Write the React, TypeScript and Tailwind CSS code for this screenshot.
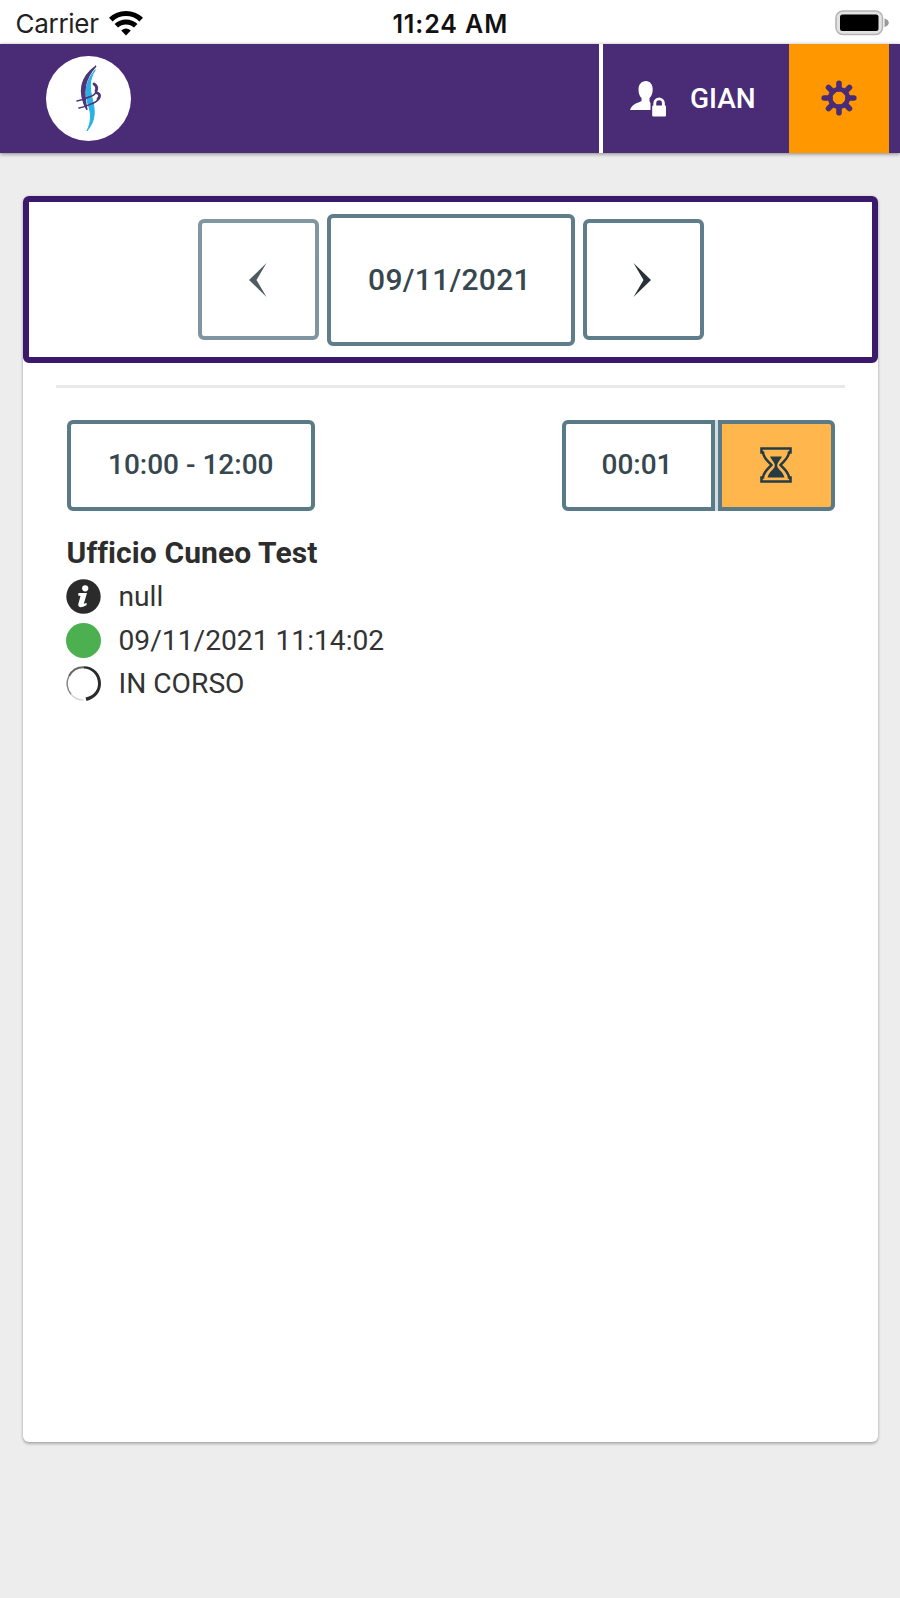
import type { ReactNode } from "react";

function WifiIcon() {
  return (
    <svg className="mb-[2px] block h-[26px] w-[34px]" viewBox="0 0 34 26" fill="none" stroke="#000">
      <path d="M1.8 9.6A22 22 0 0 1 32.2 9.6" strokeWidth="5.2" />
      <path d="M7.3 15.8A14 14 0 0 1 26.7 15.8" strokeWidth="5" />
      <path d="M12.2 20.500Q17 16.7 21.8 20.500L17 25.500Z" fill="#000" stroke="none" />
    </svg>
  );
}

function BatteryIcon() {
  return (
    <svg className="block h-[26px] w-[54px]" viewBox="0 0 54 26">
      <rect x="1" y="1" width="46.5" height="23.5" rx="7" fill="#e2e2e2" stroke="#b5b5b5" strokeWidth="1.6" />
      <rect x="5" y="4.500" width="38.500" height="16.500" rx="2.5" fill="#000" />
      <path d="M49.500 8.5Q53.8 10 53.8 12.8T49.500 17Z" fill="#999" />
    </svg>
  );
}

function Logo() {
  return (
    <div className="flex h-[85px] w-[85px] items-center justify-center rounded-full bg-white">
      <svg className="h-[85px] w-[85px]" viewBox="0 0 85 85" fill="none" strokeLinecap="round">
        <path d="M49 14C39 26 39 36 42 48C46 59 45 66 41 75C50 64 49 55 46.500 44C43.500 32 43 24 49 14Z" fill="#29b1e6" stroke="#29b1e6" strokeWidth="1" />
        <path d="M50 10C32 23 33 39 41 54C37.500 37 37 24 50 10Z" fill="#4c3579" stroke="#4c3579" strokeWidth="1.400" />
        <path d="M48 28C53 32 51 39 43 41C39 43 36 44 31 45" stroke="#4c3579" strokeWidth="1.500" />
        <path d="M51 37C57 39 52 46 45 48C40 50 38 51 33 52" stroke="#4c3579" strokeWidth="1.500" />
        <path d="M48 28C51 30 51 33 50 35M51 37C54.500 38 54 41 52 43" stroke="#4c3579" strokeWidth="2.8" />
      </svg>
    </div>
  );
}

function UserLockIcon() {
  return (
    <svg className="block h-[36px] w-[37px]" viewBox="0 0 37 36" fill="#fff">
      <path d="M16 0C11.500 0 8.500 3.500 8.500 8.500C8.500 12.500 9.500 15 11.500 17V20C8 22.500 2.500 22 0 29H20.500V22.500L19.500 20V17C21.500 15 22.700 12.500 22.700 8.500C22.700 3.500 20 0 16 0Z" />
      <rect x="22.200" y="24.500" width="13.800" height="11" rx="1" />
      <path d="M24.800 25V22.200A4.300 4.300 0 0 1 33.400 22.200V25" fill="none" stroke="#fff" strokeWidth="2.900" />
    </svg>
  );
}

const spokes = [0, 45, 90, 135, 180, 225, 270, 315];

function GearIcon() {
  return (
    <svg className="mb-px block h-[36px] w-[36px]" viewBox="-18 -18 36 36">
      {spokes.map((angle) => (
        <line key={angle} x1="0" y1="-9" x2="0" y2="-14.800" transform={`rotate(${angle})`} stroke="#4a2b76" strokeWidth="5.600" strokeLinecap="round" />
      ))}
      <circle r="8.800" fill="none" stroke="#4a2b76" strokeWidth="4.600" />
    </svg>
  );
}

function HourglassIcon() {
  return (
    <svg className="mb-[2px] block h-[36px] w-[32px]" viewBox="0 0 32 36" fill="none" stroke="#263c45">
      <path d="M1.500 1.500H30.500V5.500H29C28.500 11 24 14 20.500 18C24 22 28.500 25 29 30.500H30.500V34.500H1.500V30.500H3C3.500 25 8 22 11.500 18C8 14 3.500 11 3 5.500H1.500Z" strokeWidth="2.600" />
      <path d="M10 9.500H22C20.500 12.500 18 15 17.300 17.500V19.500C18.500 23 23 24.500 24.500 30.500H7.500C9 24.500 13.500 23 14.700 19.500V17.500C14 15 11.500 12.500 10 9.500Z" fill="#263c45" stroke="none" />
    </svg>
  );
}

function InfoIcon() {
  return (
    <svg className="block h-[35px] w-[35px]" viewBox="0 0 35 35">
      <circle cx="17.500" cy="17.500" r="17.200" fill="#2b2b2b" />
      <circle cx="19.200" cy="9.300" r="3.100" fill="#fff" />
      <path d="M12.500 14H21L17.800 24.700L20.800 24L20.400 26.300Q12.500 30.500 12.200 25.500L14.500 17L12.100 16.500Z" fill="#fff" />
    </svg>
  );
}

function SpinnerIcon() {
  return (
    <svg className="block h-[35px] w-[35px]" viewBox="0 0 35 35" fill="none">
      <path d="M17.500 34A16.500 16.500 0 0 1 5 28.300" stroke="#ccc" strokeWidth="1.200" />
      <path d="M5 28.300A16.500 16.500 0 0 1 3 10" stroke="#888" strokeWidth="1.500" />
      <path d="M3 10A16.500 16.500 0 0 1 17.500 1.200" stroke="#666" strokeWidth="1.900" />
      <path d="M17.500 .3C28 .3 35 8 35 17.500C35 26 29 33 20.500 35L19.500 31.500C27 30 32 25 32 17.500C32 9.500 26 2.500 17.500 2.500Z" fill="#2b2b2b" />
    </svg>
  );
}

function DetailRow({ icon, children }: { icon: ReactNode; children: ReactNode }) {
  return (
    <li className="flex h-[43.500px] items-center gap-[17.500px]">
      {icon}
      <span>{children}</span>
    </li>
  );
}

export default function App() {
  return (
    <div className="flex h-[1598px] w-[900px] flex-col overflow-hidden bg-[#ededed] font-['Roboto',sans-serif] text-[#333]">
      <div className="grid h-[44px] shrink-0 grid-cols-3 items-center bg-white pr-[11px] pl-[15.500px] font-['Inter',sans-serif] text-[#222]">
        <div className="flex items-center gap-[10px] pt-[3px]">
          <span className="text-[26px] leading-8 tracking-[-0.300px]">Carrier</span>
          <WifiIcon />
        </div>
        <div className="pt-1 pr-[4px] text-center text-[25px] leading-8 font-semibold tracking-[0.900px] text-[#111]">11:24 AM</div>
        <div className="flex justify-end pt-[2px]"><BatteryIcon /></div>
      </div>

      <header className="z-10 flex h-[109px] shrink-0 items-stretch bg-[#4a2b76] pr-[11px] shadow-[0_1px_4px_rgba(0,0,0,0.45)]">
        <div className="flex flex-1 items-center pl-[46px]"><Logo /></div>
        <button className="flex w-[190px] items-center gap-[23px] border-l-[4px] border-white pl-[27px] text-[28px] font-medium text-white">
          <UserLockIcon />
          <span>GIAN</span>
        </button>
        <button className="flex w-[100px] items-center justify-center bg-[#ff9800]"><GearIcon /></button>
      </header>

      <main className="mt-[43px] ml-[23px] flex h-[1246px] w-[855px] shrink-0 flex-col rounded-[6px] bg-white shadow-[0_2px_3px_rgba(0,0,0,0.25),0_0_3px_rgba(0,0,0,0.12)]">
        <nav className="flex h-[167px] items-center justify-center gap-[8px] rounded-[6px] border-[6px] border-[#3c1a6b] text-[#37474f]">
          <button className="flex h-[121px] w-[121px] items-center justify-center rounded-[6px] border-[4px] border-[#607d8b] opacity-80">
            <svg className="h-[34px] w-[18px]" viewBox="0 0 18 34"><path d="M17.500 0L7.500 17L17.500 34L0 17Z" fill="#263238" /></svg>
          </button>
          <button className="h-[132px] w-[248px] rounded-[6px] border-[4px] border-[#607d8b] pr-[2px] pb-px text-[30px] font-medium tracking-[0.300px]">09/11/2021</button>
          <button className="flex h-[121px] w-[121px] items-center justify-center rounded-[6px] border-[4px] border-[#607d8b]">
            <svg className="mr-[3px] h-[34px] w-[18px]" viewBox="0 0 18 34"><path d="M.5 0L10.500 17L.5 34L18 17Z" fill="#263238" /></svg>
          </button>
        </nav>
        <div className="mx-[33px] mt-[22px] h-[3px] bg-[#e9e9e9]" />

        <section className="flex flex-col pt-[32px] pr-[43.500px] pl-[43.500px]">
          <div className="flex h-[91px] justify-between text-[28px] font-medium text-[#37474f]">
            <button className="w-[248.500px] rounded-[6px] border-[4px] border-[#5b7a87] pb-px">10:00 - 12:00</button>
            <div className="flex gap-[3px] rounded-[6px] bg-[#d3dde2]">
              <button className="w-[153px] rounded-l-[6px] border-[4px] border-[#5b7a87] bg-white pr-[2px] pb-px">00:01</button>
              <button className="flex w-[117px] items-center justify-center rounded-r-[6px] border-[4px] border-[#5b7a87] bg-[#ffb74d]"><HourglassIcon /></button>
            </div>
          </div>
          <h2 className="mt-[20px] mb-px h-[43px] text-[30px] leading-[43px] font-bold tracking-[0.100px] text-[#2d2d2d]">Ufficio Cuneo Test</h2>
          <ul className="-ml-[0.500px] text-[28.200px] leading-[43px]">
            <DetailRow icon={<InfoIcon />}>null</DetailRow>
            <DetailRow icon={<div className="h-[35px] w-[35px] rounded-full bg-[#4caf50]" />}>09/11/2021 11:14:02</DetailRow>
            <DetailRow icon={<SpinnerIcon />}>IN CORSO</DetailRow>
          </ul>
        </section>
      </main>
    </div>
  );
}
